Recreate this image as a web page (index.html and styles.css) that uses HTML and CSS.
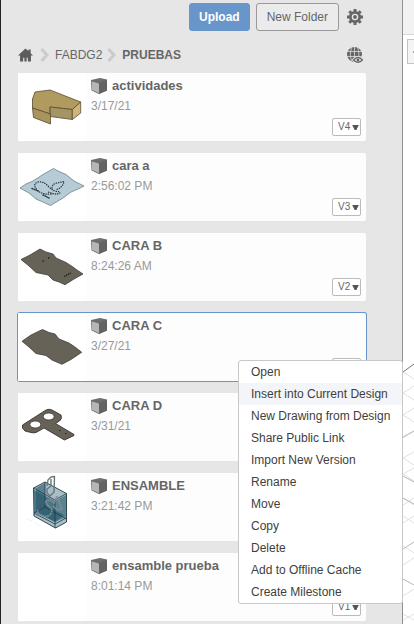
FILE: index.html
```html
<!DOCTYPE html>
<html lang="en">
<head>
<meta charset="utf-8">
<meta name="viewport" content="width=device-width, initial-scale=1">
<title>PRUEBAS</title>
<link rel="stylesheet" href="styles.css">
</head>
<body>
<svg class="defs" aria-hidden="true">
  <symbol id="cube" viewBox="0 0 16 16">
    <path d="M0 2 9 0 16 1.500V12.500L8 16 .5 12.500z" fill="#6e6e6e"/>
    <path d="M8 5 16 2V12.500L8 16z" fill="#626262"/>
    <path d="M1 3.500 8 5.500V15L1 12z" fill="#b6b6b6"/>
  </symbol>
  <symbol id="chevron" viewBox="0 0 9 14">
    <path d="M1.500 1 7 7 1.500 13" fill="none" stroke="#cbcbcb" stroke-width="3"/>
  </symbol>
  <symbol id="caret" viewBox="0 0 8 6"><path d="M0 0H8L5 6H3z" fill="#555"/></symbol>
</svg>
<div class="app">
  <main class="panel">
    <div class="toolbar">
      <button class="btn btn-primary" type="button">Upload</button>
      <button class="btn" type="button">New Folder</button>
      <button class="icon-btn" type="button" aria-label="Settings">
        <svg width="16" height="16" viewBox="0 0 16 16" fill="none" stroke="#666">
          <circle cx="8" cy="8" r="4.700" stroke-width="2.800"/>
          <circle cx="8" cy="8" r="1.900" fill="#666" stroke="none"/>
          <path stroke-width="3" d="M8 0V3M8 13V16M0 8H3M13 8H16M2.300 2.300 4.300 4.300M11.700 11.700 13.700 13.700M2.300 13.700 4.300 11.700M11.700 4.300 13.700 2.300"/>
        </svg>
      </button>
    </div>
    <div class="pathbar">
      <nav class="crumbs" aria-label="Breadcrumb">
        <a href="#" aria-label="Home">
          <svg width="15" height="14" viewBox="0 0 16 14"><path d="M8 0 11 2.800V1H13.500V5.200L16 7.500H13.800V14H10.500V10H9.200V14H6.800V10H5.500V14H2.200V7.500H0z" fill="#5c5c5c"/></svg>
        </a>
        <svg width="9" height="14"><use href="#chevron"/></svg>
        <a href="#">FABDG2</a>
        <svg class="tight" width="9" height="14"><use href="#chevron"/></svg>
        <a class="current" href="#" aria-current="page">PRUEBAS</a>
      </nav>
      <button class="icon-btn" type="button" aria-label="Open on the web">
        <svg width="16" height="16" viewBox="0 0 16 16">
          <circle cx="7.500" cy="7.500" r="7.500" fill="#666"/>
          <path d="M0 4.500H15M0 9.500H15M7.500 0V15M4.500 0Q2 7.500 4.500 15M10.500 0Q13 7.500 11 12" fill="none" stroke="#dcdcdc" stroke-width=".8"/>
          <path d="M4.500 13Q10.500 5 17 13Q10.500 20 4.500 13z" fill="#e6e6e6"/>
          <path d="M6.500 13Q11 8 15.500 13Q11 17.500 6.500 13z" fill="#e6e6e6" stroke="#666" stroke-width="1.300"/>
          <circle cx="11" cy="12.900" r="1.400" fill="#666"/>
        </svg>
      </button>
    </div>

    <ul class="files">
      <li class="card">
        <svg class="thumb" viewBox="0 0 68 68">
          <g stroke="#594d2e" stroke-width=".8" stroke-linejoin="round">
            <path d="M17 19 32 17 62.700 29 54.300 36.500 32 34V41L14.500 35V26z" fill="#b19a5f"/>
            <path d="M14.500 35 32.500 41V51L15.500 44.500z" fill="#a9945c"/>
            <path d="M32 34 54.300 36.500V46.500L32.500 43.500z" fill="#a59464"/>
            <path d="M54.300 36.500 62.700 29V40L54.300 46.500z" fill="#ceb478"/>
          </g>
        </svg>
        <div class="info">
          <h2 class="name"><svg class="cube"><use href="#cube"/></svg>actividades</h2>
          <time class="date">3/17/21</time>
        </div>
        <div class="version"><select aria-label="Version of actividades"><option>V4</option></select><svg class="caret"><use href="#caret"/></svg></div>
      </li>
      <li class="card">
        <svg class="thumb" viewBox="0 0 68 68">
          <path d="M2 35 8 31 15 28 25 21.500 35.500 15.500 40 18 48 21.500 56 28 66 33 60 36 53 39 45 45 32.500 52.500 26 49.500 18 46 11 40z" fill="#b5cbd6" stroke="#6c808a" stroke-width=".8" stroke-linejoin="round"/>
          <g fill="none" stroke="#26333b" stroke-linecap="round">
            <path d="M33 41Q24 42 19 37Q14 31 20 29Q26 28 31 34Q36 39 41 38.500Q44 41 36 41L30 39M34 35Q34 31 39 30L46 28.500Q45 34 39 36.500" stroke-width="1.300" stroke-dasharray=".3 2"/>
            <path d="M14 35.500 20 38M25 42 31 45" stroke-width="1.500" stroke-dasharray=".5 1.600"/>
          </g>
        </svg>
        <div class="info">
          <h2 class="name"><svg class="cube"><use href="#cube"/></svg>cara a</h2>
          <time class="date">2:56:02 PM</time>
        </div>
        <div class="version"><select aria-label="Version of cara a"><option>V3</option></select><svg class="caret"><use href="#caret"/></svg></div>
      </li>
      <li class="card">
        <svg class="thumb" viewBox="0 0 68 68">
          <path d="M3 26.500 12 22 22 16 28 19 35 21 38 25 48 29.500 55 34 59 37 65 41 56 46 47 51.700 41 49 35 47 30 42 18 39.500 11 33z" fill="#666257" stroke="#403e37" stroke-width=".8" stroke-linejoin="round"/>
          <path d="M24.500 28H26M30 25H31.500M46 43.500 53 40" stroke="#25241f" stroke-width="1.300" stroke-dasharray="1.500 .6"/>
        </svg>
        <div class="info">
          <h2 class="name"><svg class="cube"><use href="#cube"/></svg>CARA B</h2>
          <time class="date">8:24:26 AM</time>
        </div>
        <div class="version"><select aria-label="Version of CARA B"><option>V2</option></select><svg class="caret"><use href="#caret"/></svg></div>
      </li>
      <li class="card selected">
        <svg class="thumb" viewBox="0 0 68 68">
          <path d="M4 28.300 13 22 24.500 16.500 31 19.500 37 21 41 26 51 30 57 34 63.700 39.300 53 46.500 44 51.300 34 47 28 42.500 18 40.500 11 34z" fill="#666257" stroke="#403e37" stroke-width=".8" stroke-linejoin="round"/>
        </svg>
        <div class="info">
          <h2 class="name"><svg class="cube"><use href="#cube"/></svg>CARA C</h2>
          <time class="date">3/27/21</time>
        </div>
        <div class="version"><select aria-label="Version of CARA C"><option>V1</option></select><svg class="caret"><use href="#caret"/></svg></div>
        <div class="menu" role="menu">
          <button type="button" role="menuitem">Open</button>
          <button type="button" role="menuitem" class="active">Insert into Current Design</button>
          <button type="button" role="menuitem">New Drawing from Design</button>
          <button type="button" role="menuitem">Share Public Link</button>
          <button type="button" role="menuitem">Import New Version</button>
          <button type="button" role="menuitem">Rename</button>
          <button type="button" role="menuitem">Move</button>
          <button type="button" role="menuitem">Copy</button>
          <button type="button" role="menuitem">Delete</button>
          <button type="button" role="menuitem">Add to Offline Cache</button>
          <button type="button" role="menuitem">Create Milestone</button>
        </div>
      </li>
      <li class="card">
        <svg class="thumb" viewBox="0 0 68 68">
          <path d="M4.500 32 28 17Q31 15.500 34 17L43 22Q44.500 26 41.500 28L37.500 30.500 56 41.500V42.500L46.500 47 26 35 19 39Q16 40.500 13 39.500L7 38 4.500 35z" fill="#666257" stroke="#38362f" stroke-width=".9" stroke-linejoin="round"/>
          <g fill="#fdfdfd" stroke="#34322c" stroke-width=".8"><ellipse cx="30.700" cy="23.500" rx="5.500" ry="3.500"/><ellipse cx="17.300" cy="31.500" rx="5.500" ry="3.500"/></g>
          <path d="M41 37.500H42.500M47 40.500H48.500" stroke="#222"/>
        </svg>
        <div class="info">
          <h2 class="name"><svg class="cube"><use href="#cube"/></svg>CARA D</h2>
          <time class="date">3/31/21</time>
        </div>
      </li>
      <li class="card">
        <svg class="thumb" viewBox="0 0 68 68">
          <g stroke-linejoin="round">
            <path d="M15.500 15 27 9 48.500 20.500V49L37.500 55 16 43z" fill="#a7bec7" stroke="#334850"/>
            <path d="M16 17 37 28V49L16 39z" fill="#497786"/>
            <path d="M37 28 48 22V44L37 49z" fill="#5b8492"/>
            <path d="M18 15 27 10V32L46 42 37 49 18 38z" fill="#28576a" fill-opacity=".6"/>
            <path d="M15.500 15 37 27 48.500 20.500M37 27V55M27 9V34L48.500 46M27 34 16 40 37 51 48 45" fill="none" stroke="#193a46" stroke-width=".8"/>
            <path d="M29 13 30 7 33 4 36.500 3.500 36 19 32 23 29 20 29 16 33 13 33 6" fill="none" stroke="#68767c" stroke-width="1.400"/>
            <path d="M20 37Q18 41 25 43Q33 45 34 37Q29 31 27 29Q32 25 36 30L39 23 44 36Q40 38 35 33" fill="none" stroke="#8b8e91" stroke-width="1.800" stroke-dasharray="1.500 .7"/>
          </g>
          <path d="M9 46 14 48M17 50 22 53" stroke="#e6edf3" stroke-dasharray="2 1"/>
        </svg>
        <div class="info">
          <h2 class="name"><svg class="cube"><use href="#cube"/></svg>ENSAMBLE</h2>
          <time class="date">3:21:42 PM</time>
        </div>
      </li>
      <li class="card">
        <div class="thumb"></div>
        <div class="info">
          <h2 class="name"><svg class="cube"><use href="#cube"/></svg>ensamble prueba</h2>
          <time class="date">8:01:14 PM</time>
        </div>
        <div class="version"><select aria-label="Version of ensamble prueba"><option>V1</option></select><svg class="caret"><use href="#caret"/></svg></div>
      </li>
    </ul>
  </main>
  <aside class="viewport" aria-label="Model view">
    <div class="ribbon"></div>
    <button class="collapse" type="button" aria-label="Collapse browser"><svg width="6" height="8" viewBox="0 0 6 8"><path d="M0 4 4 1V3H6V5H4V7z" fill="#222"/></svg></button>
    <svg class="grid" width="11" height="260" viewBox="0 0 11 260" fill="none">
      <path d="M0 10 11 17M11 24 0 31 11 38M11 46 0 53 11 60M11 69 0 76M0 96 11 90M0 96 11 103M0 112 11 106M0 112 11 119M0 136 11 143M0 143 11 136M0 154 11 161M0 161 11 154M0 184 11 191M11 196 0 203M0 234 11 227M0 252 11 258M0 258 11 252" stroke="#e0e0e0"/>
      <path d="M0 75 11 69M0 114 11 120M0 136 11 142M0 187 11 180M0 217 11 223" stroke="#b9b9b9"/>
      <path d="M0 10 11 2" stroke="#777"/>
    </svg>
  </aside>
</div>
</body>
</html>
```
FILE: styles.css
```css
* { box-sizing: border-box; }

body {
  margin: 0;
  background: #fff;
  color: #666;
  font: 12px/16px "Liberation Sans", Arial, sans-serif;
}

button, select { font: inherit; color: inherit; margin: 0; }
svg { display: block; flex: none; }
a { color: inherit; text-decoration: none; }
.defs { position: absolute; width: 0; height: 0; }

.app { display: flex; min-height: 100vh; }

.panel {
  flex: 1;
  min-width: 0;
  padding: 3px 36px 3px 17px;
  background: #e6e6e6;
  border-left: 1px solid #242024;
  border-right: 1px solid #919191;
}

.toolbar { display: flex; justify-content: flex-end; align-items: center; gap: 6px; padding-right: 3px; }

.btn {
  height: 28px;
  padding: 0 10px;
  border: 1px solid #999;
  border-radius: 3px;
  background: #ebebeb;
}
.btn-primary { background: #6996ca; border-color: #6996ca; color: #fff; font-weight: bold; padding: 0 9px; }

.icon-btn { flex: none; padding: 0; border: 0; background: none; }
.toolbar .icon-btn { margin-left: 2px; }

.pathbar { display: flex; justify-content: space-between; align-items: center; height: 24px; margin: 12px 3px 6px 0; }
.crumbs { display: flex; align-items: center; gap: 6px; }
.crumbs a:first-child { margin-right: 1px; }
.crumbs .tight { margin: 0 0 0 -1px; }
.crumbs .current { font-weight: bold; }

.files { list-style: none; margin: 0; padding: 0; display: flex; flex-direction: column; gap: 12px; }

.card { position: relative; display: flex; height: 68px; background: #fdfdfd; border-radius: 2px; }
.selected { box-shadow: 0 0 0 1px #6694cb; z-index: 1; }

.thumb { flex: none; width: 68px; height: 68px; background: #fff; }
.info { flex: 1; min-width: 0; padding: 4px 0 0 5px; }
.name { display: flex; align-items: center; gap: 5px; margin: 0; font-size: 13px; line-height: 18px; white-space: nowrap; }
.cube { width: 16px; height: 16px; }
.date { display: block; margin-top: 3px; color: #999; }

.version { position: relative; align-self: flex-end; margin: 0 5px 5px 0; }
.version select {
  display: block;
  appearance: none;
  width: 29px;
  height: 18px;
  padding: 0 0 0 5px;
  border: 1px solid #bbb;
  border-radius: 2px;
  background: #fff;
  font-size: 10px;
}
.caret { position: absolute; right: 2px; top: 7px; width: 7px; height: 5px; pointer-events: none; }

.menu {
  position: absolute;
  top: 47px;
  right: -37px;
  width: 165px;
  border: 1px solid #c8c8c8;
  border-radius: 3px;
  background: #fff;
  color: #404040;
}
.menu button { display: block; width: 100%; height: 22px; padding: 0 12px; border: 0; background: none; text-align: left; white-space: nowrap; }
.menu .active { background: #f3f5f8; }

.viewport { flex: none; width: 11px; overflow: hidden; background: #fff; }
.ribbon { height: 35px; background: #f2f2f2; border-bottom: 1px solid #d6d6d6; }
.collapse {
  display: flex;
  align-items: center;
  width: 24px;
  height: 25px;
  margin: 4px 0 0 4px;
  padding: 0 0 0 5px;
  border: 1px solid #c4c4c4;
  background: #f4f4f4;
}
.grid { margin-top: 298px; }
```
